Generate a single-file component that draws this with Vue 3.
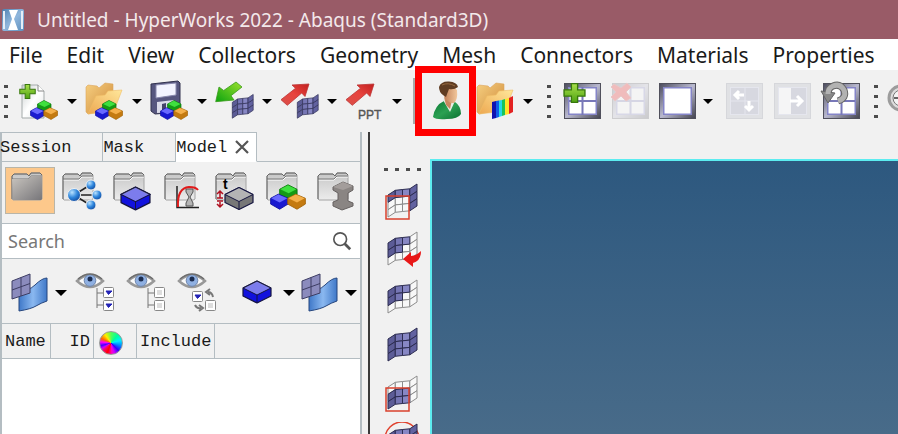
<script setup>
import { ref } from 'vue'

const menus = ['File', 'Edit', 'View', 'Collectors', 'Geometry', 'Mesh', 'Connectors', 'Materials', 'Properties']

const fileTools = [
  { id: 'new', label: 'New' },
  { id: 'open', label: 'Open' },
  { id: 'save', label: 'Save' },
  { id: 'import', label: 'Import' },
  { id: 'export', label: 'Export' },
  { id: 'ppt', label: 'Publish' }
]

const browsers = [
  { id: 'plain', label: 'All' },
  { id: 'share', label: 'Connections' },
  { id: 'part', label: 'Components' },
  { id: 'curve', label: 'Curves' },
  { id: 'thick', label: 'Properties' },
  { id: 'group', label: 'Assemblies' },
  { id: 'beam', label: 'Beam sections' }
]

const tabs = ['Session', 'Mask', 'Model']
const activeTab = ref('Model')
const activeBrowser = ref('plain')
const query = ref('')

// A curved 4 x 3 patch of elements; each mask row lists the filled cells.
const point = (u, v) => {
  const x = 6 + 29 * u
  const y = 13 - 11 * u - 2 * Math.sin(2 * Math.PI * u) + 22 * v
  return `${x.toFixed(1)},${y.toFixed(1)}`
}
const shades = ['#5c5c96', '#7676b4', '#8787c4', '#6262a0']
const patch = (mask) =>
  mask.flatMap((row, r) =>
    [...row].map((on, c) => ({
      points: [
        point(c / 4, r / 3),
        point((c + 1) / 4, r / 3),
        point((c + 1) / 4, (r + 1) / 3),
        point(c / 4, (r + 1) / 3)
      ].join(' '),
      on: on === '1',
      fill: on === '1' ? shades[c] : '#f8f8f8'
    }))
  ).sort((a, b) => a.on - b.on)

const fullPatch = patch(['1111', '1111', '1111'])
const maskTools = [
  { id: 'm1', label: 'Mask window', cells: patch(['1111', '0001', '0001']), mark: 'box' },
  { id: 'm2', label: 'Reverse mask', cells: patch(['1110', '1100', '0000']), mark: 'arrow' },
  { id: 'm3', label: 'Unmask adjacent', cells: patch(['1110', '1100', '0000']), mark: '' },
  { id: 'm4', label: 'Unmask all', cells: fullPatch, mark: '' },
  { id: 'm5', label: 'Mask outside', cells: patch(['0000', '1110', '1110']), mark: 'box' },
  { id: 'm6', label: 'Find', cells: fullPatch, mark: 'circle' }
]
</script>

<template>
  <div class="app">
    <svg class="defs" aria-hidden="true">
      <defs>
        <linearGradient id="gPage" x1="0" y1="0" x2="1" y2="1"><stop offset="0" stop-color="#c9cfcf" /><stop offset=".5" stop-color="#fff" /><stop offset="1" stop-color="#dfe3e3" /></linearGradient>
        <linearGradient id="gFold" x1="0" y1="0" x2="1" y2="1"><stop offset="0" stop-color="#f6cf80" /><stop offset="1" stop-color="#cf8a3a" /></linearGradient>
        <linearGradient id="gFold2" x1="0" y1="1" x2="1" y2="0"><stop offset="0" stop-color="#eda851" /><stop offset="1" stop-color="#ffe79a" /></linearGradient>
        <linearGradient id="gGreen" x1="0" y1="1" x2="1" y2="0"><stop offset="0" stop-color="#0ba30f" /><stop offset="1" stop-color="#9be02d" /></linearGradient>
        <linearGradient id="gPlus" x1="0" y1="0" x2="0" y2="1"><stop offset="0" stop-color="#a9e04a" /><stop offset="1" stop-color="#4fa312" /></linearGradient>
        <linearGradient id="gRed" x1="0" y1="1" x2="1" y2="0"><stop offset="0" stop-color="#d9504a" /><stop offset=".5" stop-color="#e8443e" /><stop offset="1" stop-color="#c22020" /></linearGradient>
        <linearGradient id="gFrame" x1="0" y1="0" x2="1" y2="1"><stop offset="0" stop-color="#4b4b5c" /><stop offset=".5" stop-color="#b9b9cf" /><stop offset="1" stop-color="#43434f" /></linearGradient>
        <linearGradient id="gGrey" x1="0" y1="0" x2="0" y2="1"><stop offset="0" stop-color="#c6c6c6" /><stop offset="1" stop-color="#ececec" /></linearGradient>
        <linearGradient id="gDark" x1="0" y1="0" x2="1" y2="1"><stop offset="0" stop-color="#c9c5bf" /><stop offset="1" stop-color="#77767a" /></linearGradient>
        <linearGradient id="gSurf" x1="0" y1="0" x2="1" y2="0"><stop offset="0" stop-color="#3f78c8" /><stop offset=".5" stop-color="#8ab8f0" /><stop offset="1" stop-color="#3f78c8" /></linearGradient>
        <linearGradient id="gShirt" x1="0" y1="0" x2="1" y2="1"><stop offset="0" stop-color="#0a7a35" /><stop offset=".5" stop-color="#2ba052" /><stop offset="1" stop-color="#0a7030" /></linearGradient>
        <linearGradient id="gFace" x1="0" y1="0" x2="1" y2="0"><stop offset="0" stop-color="#b9754d" /><stop offset="1" stop-color="#f2c79c" /></linearGradient>
        <radialGradient id="gBall" cx=".35" cy=".3" r=".8"><stop offset="0" stop-color="#b9e2ff" /><stop offset=".5" stop-color="#2f86dc" /><stop offset="1" stop-color="#0a3f94" /></radialGradient>
        <linearGradient id="gLogo" x1="0" y1="0" x2="1" y2="1"><stop offset="0" stop-color="#4d7fb0" /><stop offset=".5" stop-color="#8fb6dc" /><stop offset="1" stop-color="#5d8fbd" /></linearGradient>
      </defs>
      <symbol id="cubes" viewBox="0 0 28 20">
        <g stroke-linejoin="round" stroke-width=".7">
          <path d="M7.500 4 14 .5 21 4 21 8 14.500 11.500 7.500 8Z" fill="#159a15" stroke="#0b7a0b" /><path d="M8 4 14 .8 20.500 4 14.500 7Z" fill="#3fe03f" />
          <path d="M.5 11 6.500 7.800 14 11 14 15.500 7.500 19.500 .5 15.500Z" fill="#1a1ad0" stroke="#1010a0" /><path d="M1 11 6.500 8 13.500 11 7.500 14.300Z" fill="#6a6aff" />
          <path d="M13.800 11 20 7.800 27.500 11 27.500 15.500 21 19.500 13.800 15.500Z" fill="#c47a10" stroke="#a5650a" /><path d="M14.300 11 20 8 27 11 21 14.300Z" fill="#f5b04a" />
        </g>
      </symbol>
      <symbol id="folder" viewBox="0 0 38 34">
        <path d="M1 5 3 3 12 4 14 6 20 1 28 2 28 26 3 32 1 30Z" fill="url(#gFold)" stroke="#dba55c" stroke-width=".6" />
        <path d="M3 32 11 14 20 13 23 9 37 8 29 29Z" fill="url(#gFold2)" stroke="#f0bd66" stroke-width=".6" />
      </symbol>
      <symbol id="window" viewBox="0 0 37 36">
        <rect x=".5" y=".5" width="36" height="35" fill="url(#gFrame)" stroke="#50505c" />
        <rect x="4" y="4" width="29" height="28" fill="#8585c8" />
        <rect x="5.500" y="5.500" width="26" height="25" fill="#fff" />
      </symbol>
      <symbol id="plus" viewBox="0 0 22 20">
        <path d="M8 1H14V7H21V13H14V19H8V13H1V7H8Z" fill="url(#gPlus)" stroke="#38780d" stroke-width="1.300" />
      </symbol>
      <symbol id="greyfolder" viewBox="0 0 32 29">
        <path d="M1 27V4L3 2H16L18 4 20 1H29L31 3V27Q30 28 29 28H2Z" fill="url(#gGrey)" stroke="#a4a4a4" />
        <path d="M1 7H17L20 4H31" fill="none" stroke="#fff" transform="translate(0 1)" /><path d="M1 7H17L20 4H31" fill="none" stroke="#777" /><path d="M1 27V4L3 2H16L18 4 20 1H29L31 3" fill="none" stroke="#666" />
      </symbol>
      <symbol id="surface" viewBox="0 0 40 40">
        <path d="M10 15Q19 19 26 12T38 5V28Q32 30 27 33T10 38Z" fill="url(#gSurf)" stroke="#27477e" />
        <path d="M3 8 21 1V20L3 26Z" fill="#8b8bbd" stroke="#3d3d63" /><path d="M12 4.500V23M3 17 21 10.500" stroke="#3d3d63" fill="none" />
      </symbol>
      <symbol id="block" viewBox="0 0 30 24">
        <path d="M1 8 15 1 29 8V16L15 23 1 16Z" fill="currentColor" stroke="#151540" stroke-width="1.200" stroke-linejoin="round" />
        <path d="M1 8 15 1 29 8 15 15Z" fill="#fff" fill-opacity=".45" stroke="#151540" /><path d="M15 15V23" stroke="#151540" />
      </symbol>
      <symbol id="eye" viewBox="0 0 40 20">
        <path d="M2 8Q15-4 28 8 15 20 2 8Z" fill="#fafafa" stroke="#999" stroke-width="2.400" />
        <circle cx="15" cy="7.500" r="5.800" fill="#8fb0e2" stroke="#6d84ab" /><circle cx="15" cy="6" r="2.500" fill="#1c2d50" />
        <path d="M3 6Q15-4 27 6" fill="none" stroke="#6d6d6d" stroke-width="1.600" />
      </symbol>
    </svg>

    <header class="titlebar">
      <svg class="logo" viewBox="0 0 22 22">
        <rect width="22" height="22" rx="2" fill="url(#gLogo)" /><path d="M7 1H16L12 10 16 21H6L10 10Z" fill="#fff" /><path d="M1 2H3V20H1ZM19 2H21V20H19Z" fill="#e5eef7" />
      </svg>
      <h1>Untitled - HyperWorks 2022 - Abaqus (Standard3D)</h1>
    </header>

    <nav class="menubar">
      <button v-for="m in menus" :key="m" type="button">{{ m }}</button>
    </nav>

    <div class="toolbar">
      <span class="grip"><i v-for="n in 4" :key="n"></i></span>
      <div v-for="t in fileTools" :key="t.id" class="split">
        <button type="button" class="tool" :aria-label="t.label">
          <svg viewBox="0 0 40 40">
            <template v-if="t.id === 'new'">
              <path d="M3 4H19L25 10V37H3Z" fill="url(#gPage)" stroke="#a5abab" /><path d="M19 4V10H25" fill="#fff" stroke="#888" />
              <use href="#plus" x="0" y="2" width="17" height="17" />
            </template>
            <use v-if="t.id === 'open'" href="#folder" x="1" y="1" width="38" height="34" />
            <template v-if="t.id === 'save'">
              <path d="M2 3 29 0 31 2V31L6 33 2 30Z" fill="#56567f" stroke="#32324f" /><path d="M7 4 27 2V14L7 17Z" fill="#f2f3ff" stroke="#8888ad" /><path d="M8 21 25 19V31L8 32Z" fill="#dadbe9" /><path d="M13 23 17 22V29L13 30Z" fill="#44446a" />
            </template>
            <use v-if="['new', 'open', 'save'].includes(t.id)" href="#cubes" x="11" y="19" width="28" height="20" />
            <path v-if="t.id === 'import'" d="M22 1 28 6 17 14.700 20 19 1.700 20.700 5 6 9.700 9.500Z" fill="url(#gGreen)" stroke="#3a9a1c" stroke-width=".8" />
            <path v-if="['export', 'ppt'].includes(t.id)" d="M2 18.700 8.300 24.300 22.700 12 26 15.500 30 3 13 4 16.500 7.300Z" fill="url(#gRed)" stroke="#b33" stroke-width=".8" />
            <g v-if="['import', 'export'].includes(t.id)" transform="translate(14 12) scale(.72)">
              <polygon v-for="c in fullPatch" :key="c.points" :points="c.points" :fill="c.fill" stroke="#34345a" stroke-width="1" />
            </g>
            <text v-if="t.id === 'ppt'" x="14" y="38" class="ppt">PPT</text>
          </svg>
        </button>
        <button type="button" class="caret" :aria-label="t.label + ' options'"><i></i></button>
      </div>

      <span class="rule"></span>

      <button type="button" class="tool user" aria-label="User profiles">
        <svg viewBox="0 0 40 40">
          <path d="M6 36Q8 24 17 20L28 21Q34 25 34 33 31 38 20 38 9 39 6 36Z" fill="url(#gShirt)" />
          <path d="M16 19 23 31 28 20 26 17H17Z" fill="#e8efe6" /><path d="M17 16 19 24 23 28 25 19Z" fill="#c98860" />
          <path d="M15 8Q18 3 26 5L30 9Q31 19 27 22 21 23 17 15Z" fill="url(#gFace)" />
          <path d="M12 6Q14 0 22 0.500 30 1 31 6 27 9 22 8 20 13 19 16L16 14Q12 11 12 6Z" fill="#5f3c22" /><path d="M15 4Q21 1 28 5" stroke="#95683e" fill="none" />
        </svg>
        <span class="highlight"></span>
      </button>
      <div class="split">
        <button type="button" class="tool" aria-label="Results">
          <svg viewBox="0 0 40 40">
            <use href="#folder" x="1" y="1" width="38" height="34" />
            <path d="M17 21 21 20V37L17 38Z" fill="#1212b0" /><path d="M21 20 24 19.500V36L21 37Z" fill="#115ce8" /><path d="M24 19.500 27 19V35L24 36Z" fill="#25d8e8" /><path d="M27 19 30 18V34L27 35Z" fill="#19c45a" /><path d="M30 18 34 17V33L30 34Z" fill="#ffe52b" /><path d="M34 17 38 15V31L34 33Z" fill="#e32222" />
          </svg>
        </button>
        <button type="button" class="caret" aria-label="Results options"><i></i></button>
      </div>

      <span class="grip wide"><i v-for="n in 4" :key="n"></i></span>

      <div class="pages">
        <button type="button" class="tool" aria-label="Add page">
          <svg viewBox="0 0 40 40"><use href="#window" x="2" y="2" width="37" height="36" /><path d="M20.500 6V34M7 20H34" stroke="#7878b8" stroke-width="2" /><use href="#plus" x="1" y="1" width="23" height="22" /></svg>
        </button>
        <button type="button" class="tool" aria-label="Delete page" disabled>
          <svg viewBox="0 0 40 40">
            <g opacity=".22"><use href="#window" x="2" y="2" width="37" height="36" /><path d="M20.500 6V34M7 20H34" stroke="#7878b8" stroke-width="2" /></g>
            <path d="M4 3 11 7 17 2 21 6 16 11 21 17 16 20 11 15 5 20 1 16 6 11 1 6Z" fill="#f0bcbc" stroke="#e8c8c8" />
          </svg>
        </button>
        <div class="split">
          <button type="button" class="tool" aria-label="Page layout">
            <svg viewBox="0 0 40 40"><use href="#window" x="1" y="2" width="37" height="36" /></svg>
          </button>
          <button type="button" class="caret" aria-label="Page layout options"><i></i></button>
        </div>
        <button type="button" class="tool" aria-label="Swap windows" disabled>
          <svg viewBox="0 0 40 40"><rect x="1.500" y="2.500" width="36" height="35" fill="#e0e1e4" stroke="#d6d7db" /><rect x="5.500" y="6.500" width="28" height="27" fill="#d7d8e0" stroke="#e5e6ee" /><path d="M20 7V33M6 20H33" stroke="#e5e6ee" /><path d="M19 14H11M14 10 10 14 14 18M24 20V29M20 25 24 29 28 25" stroke="#fff" stroke-width="3" fill="none" /></svg>
        </button>
        <button type="button" class="tool" aria-label="Expand window" disabled>
          <svg viewBox="0 0 40 40"><rect x="1.500" y="2.500" width="36" height="35" fill="#e0e1e4" stroke="#d6d7db" /><rect x="5.500" y="6.500" width="28" height="27" fill="#d7d8e0" stroke="#e5e6ee" /><path d="M6 7H18V33H6Z" fill="#f5f5f6" /><path d="M17 20H28M24 15 29 20 24 25" stroke="#fff" stroke-width="3" fill="none" /></svg>
        </button>
        <button type="button" class="tool" aria-label="Reset page">
          <svg viewBox="0 0 40 40"><use href="#window" x="2" y="2" width="37" height="36" /><path d="M20.500 6V34M7 20H34" stroke="#7878b8" stroke-width="2" /><path d="M17 20Q26 17 23 9 19 2 12 5 7 7 7 13" stroke="#666" stroke-width="7" fill="none" /><path d="M0 10 14 12 7 22Z" fill="#888" stroke="#666" /><path d="M17 20Q26 17 23 9 19 2 12 5 7 7 7 13" stroke="#b2b2b2" stroke-width="5" fill="none" /></svg>
        </button>
      </div>

      <span class="grip end"><i v-for="n in 4" :key="n"></i></span>
      <button type="button" class="tool" aria-label="View controls">
        <svg viewBox="0 0 40 40"><circle cx="13" cy="17" r="12" fill="#ddd" stroke="#9c9c9c" stroke-width="3" /><circle cx="13" cy="17" r="8" fill="#f3f3f3" stroke="#777" /><path d="M13 10V24M6 17H20" stroke="#666" stroke-width="2" /></svg>
      </button>
    </div>

    <main class="work">
      <section class="browser">
        <div class="tabs" role="tablist">
          <button v-for="t in tabs" :key="t" type="button" role="tab" :aria-selected="t === activeTab" :class="{ active: t === activeTab }" @click="activeTab = t">
            {{ t }}
            <svg v-if="t === 'Model'" class="close" viewBox="0 0 16 16"><path d="M2 2 14 14M14 2 2 14" stroke="#555" stroke-width="2.200" /></svg>
          </button>
          <span class="tabfill"></span>
        </div>

        <div class="kinds">
          <button v-for="b in browsers" :key="b.id" type="button" :aria-label="b.label" :class="{ active: b.id === activeBrowser }" @click="activeBrowser = b.id">
            <svg viewBox="0 0 50 46">
              <use href="#greyfolder" x="6" y="4" width="32" height="29" />
              <path v-if="b.id === 'plain'" d="M7 11H23L26 8H37V31L36 32H8Z" fill="url(#gDark)" />
              <g v-if="b.id === 'share'">
                <path d="M18 27 34 17M18 27H40M18 27 34 37" stroke="#222" stroke-width="1.500" />
                <circle cx="18" cy="27" r="6.500" fill="url(#gBall)" stroke="#f1f1f1" /><circle cx="35" cy="17" r="5" fill="url(#gBall)" stroke="#f1f1f1" /><circle cx="41" cy="27" r="5" fill="url(#gBall)" stroke="#f1f1f1" /><circle cx="35" cy="37" r="5" fill="url(#gBall)" stroke="#f1f1f1" />
              </g>
              <use v-if="b.id === 'part'" class="blue" href="#block" x="13" y="18" width="31" height="25" />
              <g v-if="b.id === 'curve'" fill="none">
                <path d="M28 21H35V24L32 29 35 35V38H28V35L31 29 28 24Z" fill="#b5b5b5" stroke="#555" /><path d="M19 18V39.500H41" stroke="#222" stroke-width="1.500" /><path d="M20 39Q19 20 31 19 38 19 40 22" stroke="#e01b1b" stroke-width="2" />
              </g>
              <g v-if="b.id === 'thick'">
                <use class="grey" href="#block" x="15" y="18" width="30" height="25" /><text x="14" y="21" class="tee">t</text>
                <path d="M8 30H14M11 30V24M8 26 11 23 14 26M8 33H14M11 34V39M8 36 11 39 14 36" stroke="#b01020" stroke-width="1.500" fill="none" />
              </g>
              <use v-if="b.id === 'group'" href="#cubes" x="10" y="16" width="36" height="26" />
              <path v-if="b.id === 'beam'" d="M22 19 32 14 42 18V22L37 25V33L42 35V38L31 42 22 38V34L27 32V25L22 22Z" fill="#8a8583" stroke="#666160" /><path v-if="b.id === 'beam'" d="M22 19 32 14 42 18 32 22Z" fill="#a39d9b" />
            </svg>
          </button>
        </div>

        <label class="search">
          <input v-model="query" type="text" placeholder="Search" aria-label="Search" />
          <svg viewBox="0 0 22 22"><circle cx="9" cy="9" r="7" fill="none" stroke="#555" stroke-width="1.800" /><path d="M14 14 20 20" stroke="#555" stroke-width="3" /></svg>
        </label>

        <div class="filters">
          <div class="split">
            <button type="button" class="tool" aria-label="Entities"><svg viewBox="0 0 40 40"><use href="#surface" width="40" height="40" /></svg></button>
            <button type="button" class="caret big" aria-label="Entity options"><i></i></button>
          </div>
          <div class="eyes">
            <button type="button" class="tool" aria-label="Show all">
              <svg viewBox="0 0 40 40"><use href="#eye" width="40" height="20" /><path d="M22 15V35M22 20H28M22 32H28" stroke="#777" fill="none" /><rect x="28.500" y="14.500" width="10" height="10" rx="1" fill="#fff" stroke="#888" /><rect x="28.500" y="27.500" width="10" height="10" rx="1" fill="#fff" stroke="#888" /><path d="M31 18 33.500 21.500 37 18ZM31 31 33.500 34.500 37 31Z" fill="#2323b5" stroke="#2323b5" /></svg>
            </button>
            <button type="button" class="tool" aria-label="Hide all">
              <svg viewBox="0 0 40 40"><use href="#eye" width="40" height="20" /><path d="M22 15V35M22 20H28M22 32H28" stroke="#777" fill="none" /><rect x="28.500" y="14.500" width="10" height="10" rx="1" fill="#fff" stroke="#888" /><rect x="28.500" y="27.500" width="10" height="10" rx="1" fill="#fff" stroke="#888" /><path d="M31 17H36V22H31ZM31 30H36V35H31Z" fill="#ddd" /></svg>
            </button>
            <button type="button" class="tool" aria-label="Reverse display">
              <svg viewBox="0 0 40 40"><use href="#eye" width="40" height="20" /><rect x="15.500" y="18.500" width="10" height="10" rx="1" fill="#fff" stroke="#888" /><rect x="28.500" y="27.500" width="10" height="10" rx="1" fill="#fff" stroke="#888" /><path d="M18 22 20.500 25.500 24 22Z" fill="#2323b5" stroke="#2323b5" /><path d="M31 30H36V35H31Z" fill="#ddd" /><path d="M36 24Q35 19 31 19M33 16 29 19 33 22M18 32Q20 36 24 35M22 32 26 35 22 38" fill="none" stroke="#777" stroke-width="2" /></svg>
            </button>
          </div>
          <div class="split">
            <button type="button" class="tool" aria-label="Components"><svg viewBox="0 0 40 40"><use class="blue" href="#block" x="5" y="7" width="30" height="24" /></svg></button>
            <button type="button" class="caret big" aria-label="Component options"><i></i></button>
          </div>
          <div class="split last">
            <button type="button" class="tool" aria-label="Geometry display"><svg viewBox="0 0 40 40"><use href="#surface" width="40" height="40" /></svg></button>
            <button type="button" class="caret big" aria-label="Geometry display options"><i></i></button>
          </div>
        </div>

        <table class="tree">
          <thead>
            <tr>
              <th class="name">Name</th>
              <th class="id">ID</th>
              <th class="color" aria-label="Color"><span class="wheel"></span></th>
              <th class="include">Include</th>
              <th></th>
            </tr>
          </thead>
        </table>
        <div class="rows"></div>
      </section>

      <div class="stage">
        <aside class="masks">
          <span class="grip flat"><i v-for="n in 4" :key="n"></i></span>
          <button v-for="m in maskTools" :key="m.id" type="button" :aria-label="m.label">
            <svg viewBox="0 0 40 40">
              <circle v-if="m.mark === 'circle'" cx="20" cy="17" r="17" fill="none" stroke="#e0432f" stroke-width="1.500" />
              <polygon v-for="c in m.cells" :key="c.points" :points="c.points" :fill="c.fill" :stroke="c.on ? '#2c2c50' : '#8c8c8c'" />
              <rect v-if="m.mark === 'box'" x="4" y="14" width="23" height="23" fill="none" stroke="#d9402c" stroke-width="1.500" />
              <path v-if="m.mark === 'arrow'" d="M21 29 29 22V26Q34 26 39 21 39 31 31 33L31 37Z" fill="#e81818" />
            </svg>
          </button>
        </aside>
        <div class="viewport"></div>
      </div>
    </main>
  </div>
</template>

<style>
body {
  overflow: hidden;
}
</style>

<style scoped>
.app {
  display: flex;
  flex-direction: column;
  height: 100vh;
  overflow: hidden;
  background: #f1f1f1;
  color: #1a1a1a;
  font-family: "Noto Sans", "Open Sans", sans-serif;
}
.app * {
  box-sizing: border-box;
}
.defs {
  position: absolute;
  width: 0;
  height: 0;
}
button {
  padding: 0;
  border: 0;
  background: none;
  font: inherit;
  color: inherit;
}
svg {
  display: block;
  flex: none;
}
.titlebar {
  display: flex;
  align-items: center;
  flex: none;
  gap: 13px;
  height: 39px;
  padding-left: 2px;
  background: #995b67;
  color: #f3e9eb;
}
.logo {
  width: 22px;
  height: 22px;
}
h1 {
  margin: 0;
  font-size: 19px;
  font-weight: 400;
  line-height: 38px;
  white-space: nowrap;
}
.menubar {
  display: flex;
  flex: none;
  gap: 24px;
  height: 31px;
  padding-left: 9px;
  background: #fff;
}
.menubar button {
  font-size: 21px;
  line-height: 32px;
}
.toolbar {
  display: flex;
  align-items: center;
  flex: none;
  height: 62px;
  padding-left: 4px;
}
.toolbar > *,
.pages > * {
  flex: none;
}
.grip {
  display: flex;
  flex-direction: column;
  gap: 7px;
  width: 15px;
}
.grip i {
  width: 4px;
  height: 3px;
  background: #4c4c4c;
}
.grip.wide {
  width: 22px;
  padding-left: 7px;
}
.grip.end {
  width: 14px;
  margin-left: 13px;
}
.split {
  display: flex;
}
.tool {
  width: 40px;
  height: 40px;
}
.tool svg {
  width: 40px;
  height: 40px;
}
.caret {
  display: grid;
  place-items: center;
  width: 25px;
}
.caret i {
  border: 5px solid transparent;
  border-top-color: #000;
  border-bottom: 0;
}
.caret.big {
  width: 24px;
}
.caret.big i {
  border-width: 6px 6px 0;
}
.rule {
  width: 2px;
  height: 46px;
  margin: 0 12px 0 4px;
  background: #a9a9a9;
}
.user {
  position: relative;
  margin-right: 8px;
}
.highlight {
  position: absolute;
  inset: -15px -9px -15px -12px;
  border: 7px solid #f00;
}
.pages {
  display: flex;
  gap: 8px;
}
.pages .split {
  width: 59px;
}
.ppt {
  font: 12px "Liberation Sans", sans-serif;
  fill: #555;
  stroke: #555;
  stroke-width: 0.4px;
}
.tool .ppt {
  overflow: visible;
}
.tee {
  font: bold 14px "Liberation Sans", sans-serif;
}
.blue {
  color: #1212dd;
}
.grey {
  color: #777;
}
.toolbar svg {
  overflow: visible;
}
.work {
  display: flex;
  flex: 1;
  min-height: 0;
}
.browser {
  display: flex;
  flex-direction: column;
  flex: none;
  width: 362px;
  border: solid #b4bdc2;
  border-width: 0 2px;
  font-family: "Liberation Mono", monospace;
  font-size: 17px;
}
.tabs {
  display: flex;
  flex: none;
  height: 30px;
  margin-left: -2px;
}
.tabs button {
  display: flex;
  align-items: center;
  gap: 7px;
  padding-right: 31px;
  border: solid #b4bdc2;
  border-width: 1px 1px 1px 0;
}
.tabs button.active {
  padding-right: 6px;
  border-bottom-color: #fff;
  background: #fff;
}
.close {
  width: 16px;
  height: 16px;
}
.tabfill {
  flex: 1;
  border-bottom: 1px solid #b4bdc2;
}
.kinds {
  display: flex;
  flex: none;
  gap: 1px;
  padding: 5px 0 9px 3px;
}
.kinds button {
  flex: none;
  width: 50px;
  height: 47px;
  border: 1px solid transparent;
}
.kinds button.active {
  border-color: #b9b5a8;
  background: #fdc88b;
}
.kinds svg {
  width: 50px;
  height: 46px;
  margin: -1px;
}
.search {
  display: flex;
  align-items: center;
  flex: none;
  height: 36px;
  padding: 0 8px 0 6px;
  border: solid #b4bdc2;
  border-width: 1px 0;
  background: #fff;
}
.search input {
  flex: 1;
  min-width: 0;
  padding: 0;
  border: 0;
  outline: 0;
  font: 18px "Noto Sans", sans-serif;
}
.search input::placeholder {
  color: #777;
}
.search svg {
  width: 20px;
  height: 20px;
}
.filters {
  display: flex;
  align-items: center;
  flex: none;
  height: 64px;
  padding: 4px 0 0 7px;
}
.filters .split {
  flex: none;
}
.filters .last {
  margin-left: -2px;
}
.eyes {
  display: flex;
  flex: none;
  gap: 11px;
  margin: 0 20px 0 2px;
}
.tree {
  flex: none;
  width: 100%;
  height: 36px;
  border-spacing: 0;
  table-layout: fixed;
}
.tree th {
  padding: 0 3px;
  border: solid #b4bdc2;
  border-width: 1px 1px 1px 0;
  font-weight: 400;
  text-align: left;
}
.tree th:last-child {
  border-right: 0;
}
.name {
  width: 49px;
}
.tree .id {
  width: 43px;
  text-align: right;
}
.color {
  width: 43px;
}
.include {
  width: 78px;
}
.wheel {
  display: block;
  width: 24px;
  height: 24px;
  margin: 3px 0 0 2px;
  border: 1px solid #999;
  border-radius: 50%;
  background: conic-gradient(#5f5, #0f9 40deg, #0ef 75deg, #08f 105deg, #30f 135deg, #c0f 160deg, #f0c 175deg, #f00 200deg, #f06 225deg, #c0f 240deg, #40f 255deg, #f0f 275deg, #f60 295deg, #fe0 325deg, #5f5);
}
.rows {
  flex: 1;
  background: #fff;
}
.stage {
  display: flex;
  flex: 1;
  min-width: 0;
  margin-left: 6px;
  border-left: 2px solid #3a3a3a;
}
.masks {
  display: flex;
  flex-direction: column;
  flex: none;
  width: 60px;
  padding: 36px 0 0 12px;
}
.grip.flat {
  flex-direction: row;
  flex: none;
  width: auto;
  margin-bottom: 7px;
  padding-left: 2px;
}
.masks button {
  flex: none;
  width: 40px;
  height: 48px;
}
.masks svg {
  width: 40px;
  height: 40px;
}
.viewport {
  flex: 1;
  margin-top: 27px;
  border: solid #5cecf0;
  border-width: 2px 0 0 2px;
  background: linear-gradient(#2d587f, #486b89);
}
</style>
